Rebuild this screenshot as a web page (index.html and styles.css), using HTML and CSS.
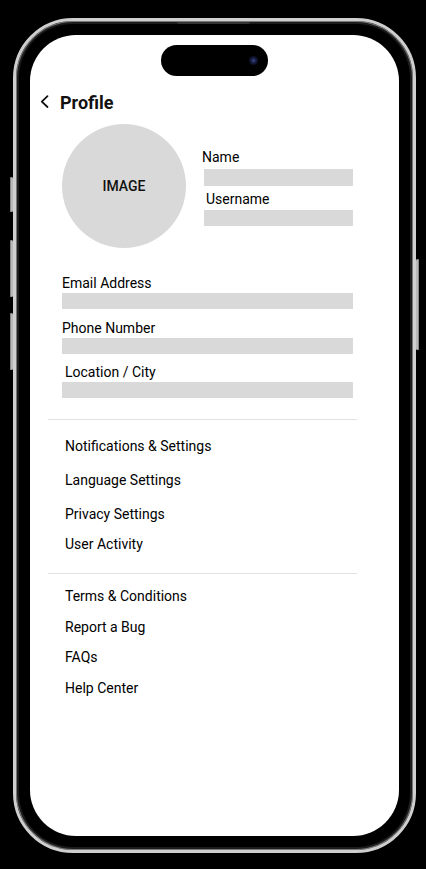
FILE: index.html
```html
<!DOCTYPE html>
<html lang="en">
<head>
    <meta charset="UTF-8">
    <meta name="viewport" content="width=device-width, initial-scale=1.0">
    <title>Profile</title>
    <link rel="stylesheet" href="styles.css">
</head>
<body>
    <div class="phone">
        <span class="side-btn btn-action"></span>
        <span class="side-btn btn-vol-up"></span>
        <span class="side-btn btn-vol-down"></span>
        <span class="side-btn btn-power"></span>
        <span class="speaker"></span>

        <div class="screen">
            <div class="island">
                <span class="camera"></span>
            </div>

            <div class="header">
                <svg class="back" width="10" height="22" viewBox="0 0 10 22">
                    <polyline points="7.5,4.2 1.8,9.6 7.5,15" fill="none" stroke="#111" stroke-width="1.8" stroke-linecap="round" stroke-linejoin="round"/>
                </svg>
                <h1>Profile</h1>
            </div>

            <div class="profile-top">
                <div class="avatar">IMAGE</div>
                <div class="name-fields">
                    <label class="label label-name">Name</label>
                    <div class="bar bar-name"></div>
                    <label class="label label-username">Username</label>
                    <div class="bar bar-username"></div>
                </div>
            </div>

            <div class="contact-fields">
                <label class="label">Email Address</label>
                <div class="bar"></div>
                <label class="label label-phone">Phone Number</label>
                <div class="bar"></div>
                <label class="label label-city">Location / City</label>
                <div class="bar"></div>
            </div>

            <hr class="divider divider-first">

            <ul class="menu menu-settings">
                <li>Notifications &amp; Settings</li>
                <li>Language Settings</li>
                <li>Privacy Settings</li>
                <li class="tight">User Activity</li>
            </ul>

            <hr class="divider divider-second">

            <ul class="menu menu-help">
                <li>Terms &amp; Conditions</li>
                <li>Report a Bug</li>
                <li>FAQs</li>
                <li>Help Center</li>
            </ul>
        </div>
    </div>
</body>
</html>
```

FILE: styles.css
```css
body {
    margin: 0;
    padding: 0;
    background: #000;
    font-family: Roboto, "Liberation Sans", Arial, sans-serif;
    color: #111;
}
.phone {
    position: relative;
    width: 403px;
    height: 835px;
    margin: 18px 0 0 13px;
    box-sizing: border-box;
    padding: 14px;
    border: 3px solid #cfcfcf;
    border-radius: 60px;
    background: #000;
    box-shadow: inset 0 0 0 1px #777, inset 0 0 0 3px #1c1c1c;
}
.side-btn {
    position: absolute;
    width: 3px;
    background: #b8b8b8;
    border-radius: 2px;
    box-shadow: inset 1px 0 0 #888;
}
.btn-action {
    left: -6px;
    top: 156px;
    height: 35px;
}
.btn-vol-up {
    left: -6px;
    top: 219px;
    height: 57px;
}
.btn-vol-down {
    left: -6px;
    top: 292px;
    height: 57px;
}
.btn-power {
    right: -6px;
    top: 238px;
    height: 91px;
    box-shadow: inset -1px 0 0 #888;
}
.speaker {
    position: absolute;
    top: 1px;
    left: 161px;
    width: 73px;
    height: 2px;
    background: #333;
    border-radius: 0 0 3px 3px;
}
.screen {
    height: 801px;
    box-sizing: border-box;
    padding-top: 10px;
    background: #fff;
    border-radius: 46px;
    overflow: hidden;
}
.island {
    width: 107px;
    height: 31px;
    margin: 0 auto;
    background: #000;
    border-radius: 16px;
    display: flex;
    align-items: center;
    justify-content: flex-end;
    padding-right: 10px;
    box-sizing: border-box;
}
.camera {
    width: 9px;
    height: 9px;
    border-radius: 50%;
    background: radial-gradient(circle, #3a4a8a 0, #1a2048 35%, #0b0d1c 70%);
}
.header {
    display: flex;
    align-items: center;
    height: 22px;
    margin-top: 16px;
    padding-left: 10px;
}
.back {
    margin-right: 10px;
}
.header h1 {
    margin: 0;
    font-size: 18px;
    line-height: 22px;
    font-weight: 700;
    color: #111;
}
.profile-top {
    display: flex;
    margin-top: 10px;
    padding-left: 32px;
}
.avatar {
    width: 124px;
    height: 124px;
    border-radius: 50%;
    background: #d9d9d9;
    display: flex;
    align-items: center;
    justify-content: center;
    font-size: 14px;
    font-weight: 500;
    color: #111;
}
.name-fields {
    width: 149px;
    margin-left: 18px;
    padding-top: 25px;
}
.label {
    display: block;
    font-size: 14px;
    line-height: 16px;
    font-weight: 450;
    color: #000;
}
.bar {
    height: 16px;
    margin-top: 2px;
    background: #d9d9d9;
}
.label-name {
    margin-left: -2px;
}
.bar-name {
    height: 17px;
    margin-top: 4px;
}
.label-username {
    margin-top: 5px;
    margin-left: 2px;
}
.bar-username {
    margin-top: 3px;
}
.contact-fields {
    width: 291px;
    margin-top: 27px;
    padding-left: 32px;
}
.label-phone {
    margin-top: 11px;
}
.label-city {
    margin-top: 10px;
    margin-left: 3px;
}
.divider {
    height: 1px;
    margin: 0 42px 0 18px;
    border: none;
    background: #e2e2e2;
}
.divider-first {
    margin-top: 21px;
}
.divider-second {
    margin-top: 21px;
}
.menu {
    list-style: none;
    margin: 0;
    padding: 0 0 0 35px;
    display: flex;
    flex-direction: column;
    font-size: 14px;
    line-height: 16px;
    font-weight: 450;
    color: #000;
}
.menu-settings {
    margin-top: 18px;
    gap: 18px;
}
.menu-settings .tight {
    margin-top: -4px;
}
.menu-help {
    margin-top: 14px;
    gap: 14.5px;
}
```
